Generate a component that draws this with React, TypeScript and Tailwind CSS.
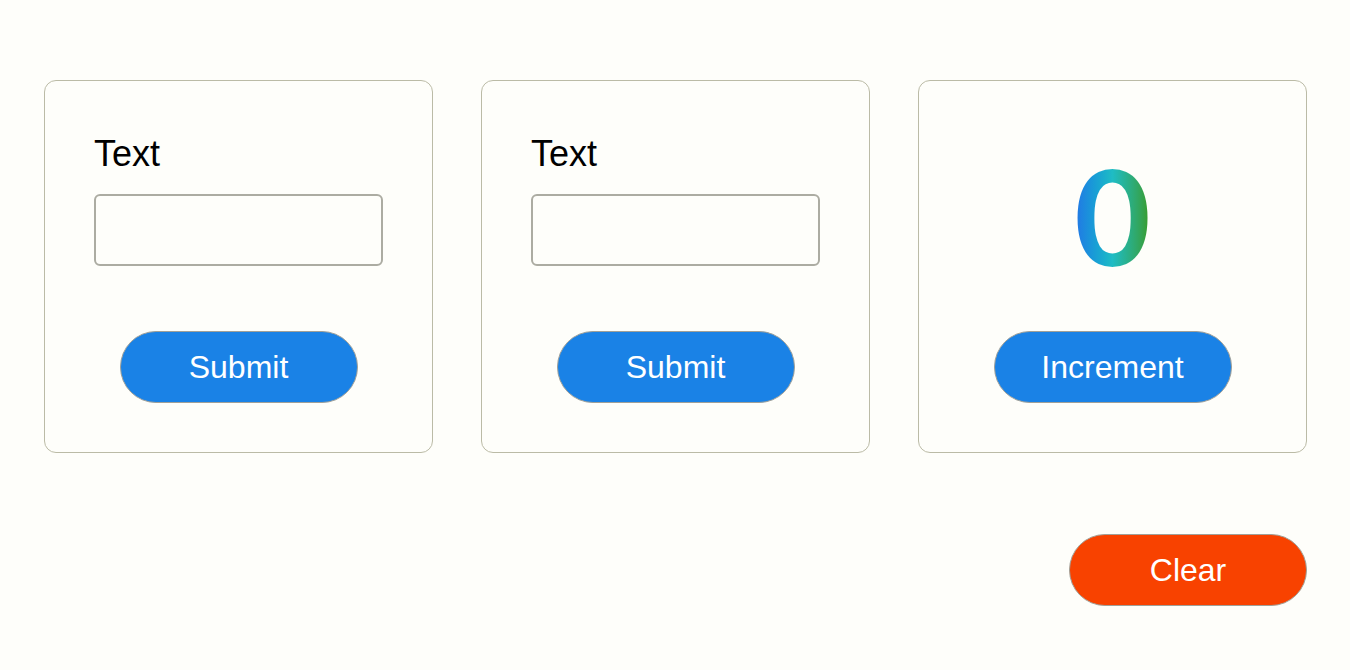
import { useState } from "react";

function TextCard() {
  const [value, setValue] = useState("");
  return (
    <div className="flex flex-col items-stretch w-[389px] h-[373px] rounded-[12px] border-[1.5px] border-[#bbbba6] px-[49px] pt-[53px]">
      <label className="block h-[40px] text-[36px] leading-[40px] text-black">Text</label>
      <input
        value={value}
        onChange={(e) => setValue(e.target.value)}
        className="mt-[20px] h-[72px] w-full rounded-[6px] border-2 border-[#acaca2] bg-transparent px-3 text-[24px] outline-none"
      />
      <button className="mx-auto mt-[65px] h-[72px] w-[238px] rounded-full border-[1.5px] border-[#a0a098] bg-[#1a82e6] text-[32px] text-white">
        Submit
      </button>
    </div>
  );
}

export default function App() {
  const [count, setCount] = useState(0);
  return (
    <div
      className="min-h-screen bg-[#fefefa] pl-[44px] pr-[43px] pt-[80px]"
      style={{ fontFamily: '"Liberation Sans", Arial, sans-serif' }}
    >
      <div className="flex gap-[48px]">
        <TextCard />
        <TextCard />
        <div className="flex flex-col items-center w-[389px] h-[373px] rounded-[12px] border-[1.5px] border-[#bbbba6] pt-[44px]">
          <div className="flex h-[180px] items-center justify-center">
            <span
              className="bg-gradient-to-r from-[#2474e6] via-[#1fbcc4] to-[#3a9a12] bg-clip-text text-transparent text-[132px] font-bold leading-none"
              style={{ fontFamily: "Lato, sans-serif" }}
            >
              {count}
            </span>
          </div>
          <button
            onClick={() => setCount(count + 1)}
            className="mt-[26px] h-[72px] w-[238px] rounded-full border-[1.5px] border-[#a0a098] bg-[#1a82e6] text-[32px] text-white"
          >
            Increment
          </button>
        </div>
      </div>
      <div className="flex justify-end mt-[81px]">
        <button
          onClick={() => setCount(0)}
          className="h-[72px] w-[238px] rounded-full border-[1.5px] border-[#a0a098] bg-[#f84200] text-[32px] text-white"
        >
          Clear
        </button>
      </div>
    </div>
  );
}
